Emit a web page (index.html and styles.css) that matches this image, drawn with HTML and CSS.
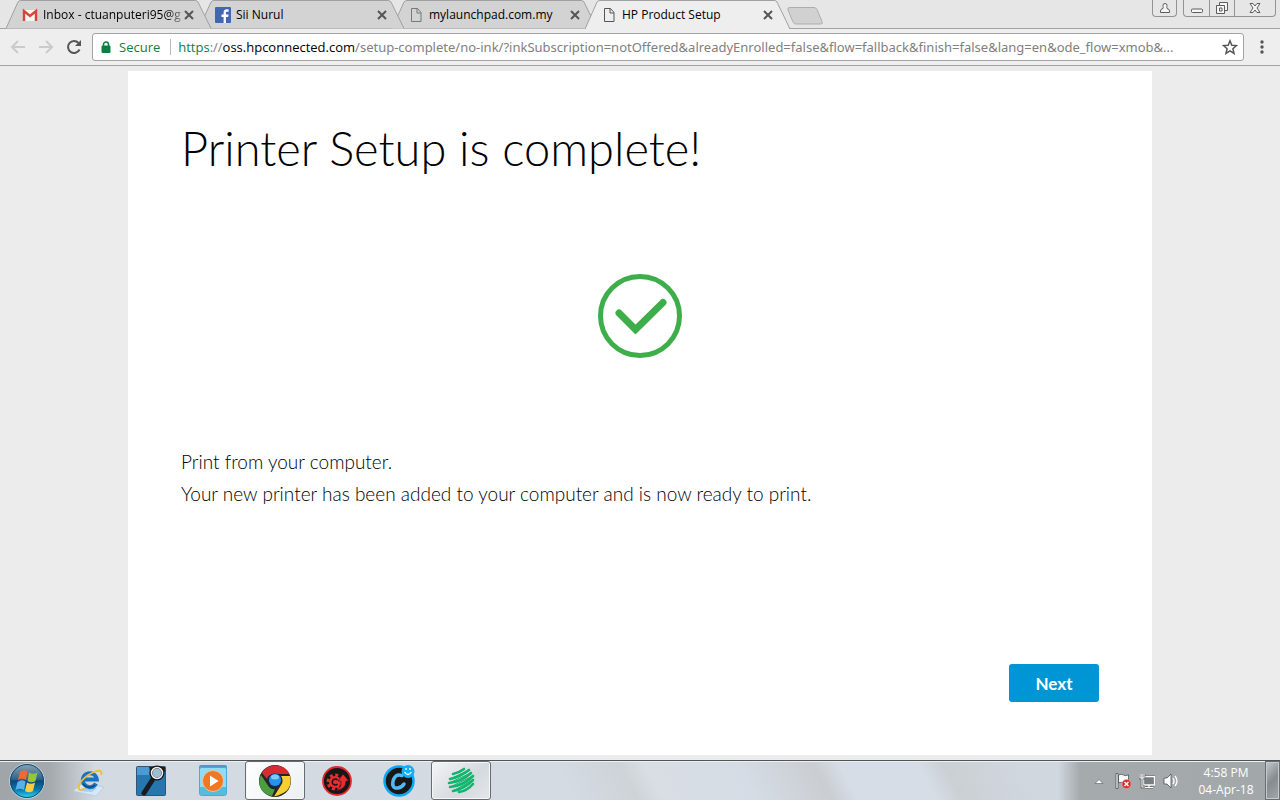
FILE: index.html
```html
<!DOCTYPE html>
<html lang="en">
<head>
    <meta charset="utf-8">
    <title>HP Product Setup</title>
    <link rel="stylesheet" href="styles.css">
</head>
<body>
    <!-- Tab strip -->
    <header class="tab-strip">
        <div class="tabs">
            <div class="tab tab-1">
                <svg class="tab-shape" viewBox="0 0 206 29" preserveAspectRatio="none"><path d="M0 28.5 L12 2 Q13 .5 15 .5 H189 Q191 .5 192 2 L205 28.5"/></svg>
                <svg class="tab-icon" viewBox="0 0 16 16"><path d="M1.500 3h13v11h-13z" fill="#f4f4f4"/><path d="M2 14V4L8 9l6-5v10" fill="none" stroke="#d84437" stroke-width="2.400"/></svg>
                <a class="tab-title fade" href="#">Inbox - ctuanputeri95@g</a>
                <button class="tab-close" aria-label="Close tab"><svg viewBox="0 0 10 10"><path d="M1 1l8 8M9 1L1 9"/></svg></button>
            </div>
            <div class="tab tab-2">
                <svg class="tab-shape" viewBox="0 0 206 29" preserveAspectRatio="none"><path d="M0 28.500 L12 2 Q13 .5 15 .5 H189 Q191 .5 192 2 L205 28.500"/></svg>
                <svg class="tab-icon" viewBox="0 0 16 16"><rect width="16" height="16" rx="1" fill="#4267b2"/><path d="M11 16v-6h2.200l.4-2.500H11V6c0-.8.400-1.200 1.300-1.200h1.300V2.500c-3.200-.6-5 .5-5 3v2H6.500V10h2.100v6z" fill="#fff"/></svg>
                <a class="tab-title" href="#">Sii Nurul</a>
                <button class="tab-close" aria-label="Close tab"><svg viewBox="0 0 10 10"><path d="M1 1l8 8M9 1L1 9"/></svg></button>
            </div>
            <div class="tab tab-3">
                <svg class="tab-shape" viewBox="0 0 206 29" preserveAspectRatio="none"><path d="M0 28.500 L12 2 Q13 .5 15 .5 H189 Q191 .5 192 2 L205 28.500"/></svg>
                <svg class="tab-icon" viewBox="0 0 16 16"><path d="M3.500 1.500h6l3.500 4v9H3.500zM9 1.500V6h4" fill="none" stroke="#777"/></svg>
                <a class="tab-title" href="#">mylaunchpad.com.my</a>
                <button class="tab-close" aria-label="Close tab"><svg viewBox="0 0 10 10"><path d="M1 1l8 8M9 1L1 9"/></svg></button>
            </div>
            <div class="tab tab-active">
                <svg class="tab-shape" viewBox="0 0 206 29" preserveAspectRatio="none"><path d="M0 29 L12 2 Q13 .5 15 .5 H189 Q191 .5 192 2 L205 29"/></svg>
                <svg class="tab-icon" viewBox="0 0 16 16"><path d="M3.500 1.500h6l3.500 4v9H3.500zM9 1.500V6h4" fill="none" stroke="#555"/></svg>
                <a class="tab-title" href="#">HP Product Setup</a>
                <button class="tab-close" aria-label="Close tab"><svg viewBox="0 0 10 10"><path d="M1 1l8 8M9 1L1 9"/></svg></button>
            </div>
            <button class="new-tab" aria-label="New tab"><svg viewBox="0 0 36 18"><path d="M3 .5h24q2 0 3 2l5 12q1 2.500-1 2.500H9q-2 0-3-2L1 3Q0 .5 3 .5z"/></svg></button>
        </div>
        <div class="window-buttons">
            <button class="win-btn win-user" aria-label="Profile"><svg viewBox="0 0 12 12"><path d="M6 1.500a2 2 0 0 1 2 2C8 5 7.500 6 8 6.500q2.500.5 2.500 2.500v1.500h-9V9q0-2 2.500-2.500C4.500 6 4 5 4 3.500a2 2 0 0 1 2-2z"/></svg></button>
            <div class="win-group">
                <button class="win-btn" aria-label="Minimize"><svg viewBox="0 0 12 12"><rect x=".5" y="7" width="11" height="3.500" rx="1"/></svg></button>
                <button class="win-btn" aria-label="Restore"><svg viewBox="0 0 12 12"><path d="M3.500 3V.5h8v8H9M.5 3.500h8v8h-8zM3.500 6h2.500v3H3.500z"/></svg></button>
                <button class="win-btn win-close" aria-label="Close"><svg viewBox="0 0 12 12"><path d="M1 1.500h3l2 2.500 2-2.500h3L8 6l3 4.500H8L6 8l-2 2.500H1L4 6z"/></svg></button>
            </div>
        </div>
    </header>

    <!-- Toolbar -->
    <nav class="toolbar">
        <button class="nav-btn" aria-label="Back"><svg viewBox="0 0 16 16"><path d="M15 8H2M8 2L2 8l6 6" fill="none" stroke="#cbcbcb" stroke-width="2"/></svg></button>
        <button class="nav-btn" aria-label="Forward"><svg viewBox="0 0 16 16"><path d="M1 8h13M8 2l6 6-6 6" fill="none" stroke="#cbcbcb" stroke-width="2"/></svg></button>
        <button class="nav-btn" aria-label="Reload"><svg viewBox="0 0 16 16"><path d="M13.500 10.500A6 6 0 1 1 12.500 4" fill="none" stroke="#555" stroke-width="2"/><path d="M15 1v6H9z" fill="#555"/></svg></button>
        <div class="address-bar">
            <svg class="lock" viewBox="0 0 10 12"><path d="M1 5h8v6.500H1z" fill="#0b8043" stroke="#0b8043"/><path d="M2.500 5V3.500a2.500 2.500 0 0 1 5 0V5" fill="none" stroke="#0b8043" stroke-width="1.500"/></svg>
            <span class="secure">Secure</span>
            <label class="url-host" for="url"><span class="scheme">https</span><span class="sep">://</span>oss.hpconnected.com</label>
            <input class="url-path" id="url" type="text" value="/setup-complete/no-ink/?inkSubscription=notOffered&amp;alreadyEnrolled=false&amp;flow=fallback&amp;finish=false&amp;lang=en&amp;ode_flow=xmob&amp;...">
            <button class="star" aria-label="Bookmark"><svg viewBox="0 0 16 16"><path d="M8 1.800l1.800 4.400 4.700.4-3.600 3.100 1.100 4.600L8 11.800l-4 2.500 1.100-4.600L1.500 6.600l4.700-.4z" fill="none" stroke="#555" stroke-width="1.500"/></svg></button>
        </div>
        <button class="menu-btn" aria-label="Menu"><svg viewBox="0 0 4 14"><circle cx="2" cy="2" r="1.700"/><circle cx="2" cy="7" r="1.700"/><circle cx="2" cy="12" r="1.700"/></svg></button>
    </nav>

    <!-- Page -->
    <main class="page">
        <section class="card">
            <h1>Printer Setup is complete!</h1>
            <svg class="check" viewBox="0 0 84 84"><circle cx="42" cy="42" r="39.500" fill="none" stroke="#3dae49" stroke-width="5"/><path d="M21 39l16.500 16.500L65 28.500" fill="none" stroke="#3dae49" stroke-width="7" stroke-linecap="round"/></svg>
            <div class="message">
                <p>Print from your computer.</p>
                <p>Your new printer has been added to your computer and is now ready to print.</p>
            </div>
            <button class="next-btn">Next</button>
        </section>
    </main>

    <!-- Taskbar -->
    <footer class="taskbar">
        <button class="start" aria-label="Start">
            <svg viewBox="0 0 38 38">
                <defs>
                    <linearGradient id="orb" x1="0" y1="0" x2="0" y2="1"><stop offset="0" stop-color="#8da5b6"/><stop offset=".45" stop-color="#2f638d"/><stop offset=".5" stop-color="#104778"/><stop offset=".75" stop-color="#087bb0"/><stop offset="1" stop-color="#38dcf8"/></linearGradient>
                </defs>
                <circle cx="19" cy="19" r="17.500" fill="url(#orb)" stroke="#b9d5e4"/>
                <circle cx="19" cy="19" r="16.500" fill="none" stroke="#174a6d"/>
                <path d="M12 10q4-3 7.500-.5L18 18q-4-2.500-8 0z" fill="#ef6a30"/>
                <path d="M21 10.500q4 2.500 8.500 0L27.500 19q-4 2.500-8 0z" fill="#93c83d"/>
                <path d="M9.500 20q4-3 8-.5L16 28q-4-2.500-8.500 0z" fill="#58b2ea"/>
                <path d="M19 20.500q4 2.500 8 0L25 29q-4 2.500-8 0z" fill="#fccd3d"/>
            </svg>
        </button>
        <div class="task-list">
            <button class="task" aria-label="Internet Explorer">
                <svg viewBox="0 0 32 32"><path d="M0 26l9-7 22 3-8 9z" fill="#d5e8f7" stroke="#a8c6df" stroke-width=".6"/><path d="M6 26l8-4 10 1-5 4z" fill="#accbe5"/><path d="M23 18.500a7 7 0 1 1 .8-4H11" fill="none" stroke="#1675bf" stroke-width="4"/><path d="M22 20a8 8 0 0 1-12-1" fill="none" stroke="#0b4c8c" stroke-width="1.500"/><path d="M28 10c2-5-2-5-7-3C11 11 4 20 6 24c1 2 4 0 6-1" fill="none" stroke="#f3bd35" stroke-width="1.800"/></svg>
            </button>
            <button class="task" aria-label="Search">
                <svg viewBox="0 0 32 32"><rect x="1.500" y="1.500" width="29" height="29" rx="1" fill="#2577ad" stroke="#305575"/><path d="M2 2h12v8H2z" fill="#4b9bd0"/><path d="M14 2h16v5H16z" fill="#19252f"/><path d="M18 14L9 28" stroke="#181b20" stroke-width="5" stroke-linecap="round"/><circle cx="22" cy="8" r="6" fill="#9dbdd1" stroke="#111" stroke-width="3"/><circle cx="22" cy="8" r="5.500" fill="none" stroke="#eee" stroke-width="1.500"/></svg>
            </button>
            <button class="task" aria-label="Media player">
                <svg viewBox="0 0 32 32"><rect x="2" y="0" width="28" height="6" rx="2" fill="#459dc8"/><rect x="2.500" y="2.500" width="27" height="28" rx="2" fill="#8fdcf3" stroke="#53a7cb"/><path d="M3 22h26v8H3z" fill="#54bddd"/><circle cx="16" cy="16" r="10.500" fill="#f07822" stroke="#e7c2a4"/><path d="M13 10.500v11l8.500-5.500z" fill="#fff"/></svg>
            </button>
            <button class="task open current" aria-label="Chrome">
                <svg viewBox="0 0 32 32"><circle cx="16" cy="16" r="16" fill="#252525"/><path d="M3 8C8-2 26-2 30.500 9H16q-7 0-8 5z" fill="#d42c32"/><path d="M2 10l8 12q3 3 6 2l-3 7C1 29-2 18 2 10z" fill="#4c9d40"/><path d="M31 11q4 16-16 20.500l8-13q1.500-4-1-7.500z" fill="#f8cf30"/><circle cx="16" cy="15.500" r="7" fill="#102f58"/><circle cx="16" cy="15" r="6" fill="#2792ec"/><ellipse cx="16" cy="12" rx="4" ry="2.500" fill="#7dcaff"/></svg>
            </button>
            <button class="task" aria-label="Driver booster">
                <svg viewBox="0 0 32 32"><circle cx="16" cy="16" r="14" fill="#171717" stroke="#e4292f" stroke-width="1.800"/><circle cx="14" cy="17" r="7" fill="none" stroke="#ec2b30" stroke-width="3" stroke-dasharray="3 2.500"/><circle cx="14" cy="17" r="6" fill="#ec2b30"/><path d="M16.500 15a3 3 0 1 0 0 4" fill="none" stroke="#171717" stroke-width="1.500"/><path d="M13 26q8-2 7-10h-3l5-7 6 7h-3q0 9-12 10z" fill="#ec2b30" stroke="#171717" stroke-width=".6"/></svg>
            </button>
            <button class="task" aria-label="Cleaner">
                <svg viewBox="0 0 32 32"><circle cx="16" cy="16" r="14.500" fill="#181818" stroke="#0ba8f5" stroke-width="2.500"/><path d="M19 10.500q-6-2-8.500 4c-2 6 0 9 4 8.500q4 0 6.500-4" fill="none" stroke="#55b8f4" stroke-width="3.500" stroke-linecap="round"/><circle cx="25" cy="6.500" r="6.500" fill="#13aef8"/><path d="M21.500 7q3.500 5 7 0M23 3v2M27 3v2" fill="none" stroke="#fff" stroke-width="1.300"/></svg>
            </button>
            <button class="task open" aria-label="Scribble">
                <svg viewBox="0 0 32 32"><g fill="none" stroke="#11b56d" stroke-width="2.600" stroke-linecap="round"><path d="M8 9Q14 8 19 4"/><path d="M5 14Q15 12 24 5"/><path d="M4 18Q16 17 26 8"/><path d="M5 22Q18 21 28 11"/><path d="M8 26Q19 24 28 15"/><path d="M14 27Q22 26 28 19"/></g><path d="M19 4L8 9M24 5L5 14M26 8L4 18M28 11L5 22M28 15L8 26" stroke="#11b56d"/></svg>
            </button>
        </div>
        <div class="tray">
            <button class="tray-btn" aria-label="Show hidden icons"><svg viewBox="0 0 16 16"><path d="M4 10.500L8 6.500l4 4z" fill="#fff" stroke="#666b70" stroke-width=".7"/></svg></button>
            <button class="tray-btn" aria-label="Action Center"><svg viewBox="0 0 16 16"><path d="M1 .5h2v15H1zM3.500 2q3-1.500 5 0t5-.2v8q-3 1-5 0t-5 0z" fill="#fff" stroke="#4d5154" stroke-width=".8"/><circle cx="11.500" cy="11" r="4.500" fill="#dc2828" stroke="#f4a5a0" stroke-width=".6"/><path d="M9.500 9l4 4m0-4l-4 4" stroke="#fff" stroke-width="1.500"/></svg></button>
            <button class="tray-btn" aria-label="Network"><svg viewBox="0 0 16 16"><path d="M4.500 3.500h11v8.500h-11zM6 14.500h8M10 12v2" fill="#777e82" stroke="#444" stroke-width="2.400"/><path d="M4.500 3.500h11v8.500h-11zM6 14.500h8M10 12v2" fill="#777e82" stroke="#fff" stroke-width="1.300"/><path d="M1 1v4h4V1M3 5v9h3" fill="none" stroke="#444" stroke-width="2.500"/><path d="M1 1v4h4V1M3 1v13h3" fill="none" stroke="#fff" stroke-width="1.200"/></svg></button>
            <button class="tray-btn" aria-label="Volume"><svg viewBox="0 0 16 16"><path d="M1 5h3l4-4v14l-4-4H1z" fill="#fff" stroke="#4d5154" stroke-width=".8"/><path d="M10 5q2 3 0 6M12 3q4 5 0 10" fill="none" stroke="#fff" stroke-width="1.300"/></svg></button>
            <div class="clock">
                <time>4:58 PM</time>
                <time>04-Apr-18</time>
            </div>
            <button class="show-desktop" aria-label="Show desktop"></button>
        </div>
    </footer>
</body>
</html>
```

FILE: styles.css
```css
* {
    box-sizing: border-box;
}

body {
    margin: 0;
    min-height: 100vh;
    display: flex;
    flex-direction: column;
    background: #ececec;
    font-family: "Open Sans", "Noto Sans", sans-serif;
    font-size: 12px;
    color: #000;
}

button {
    padding: 0;
    border: none;
    background: none;
    font-family: inherit;
    cursor: pointer;
}

a {
    color: inherit;
    text-decoration: none;
}

svg {
    display: block;
}

/* Tab strip */
.tab-strip {
    display: flex;
    justify-content: space-between;
    height: 29px;
    padding: 0 4px 0 6px;
    background: #e6e6e6;
    box-shadow: inset 0 -1px #a3a3a3;
}

.tabs {
    display: flex;
}

.tab {
    position: relative;
    display: flex;
    align-items: center;
    width: 206px;
    height: 29px;
    margin-right: -13px;
    padding: 0 18px 0 16px;
}

.tab-1 {
    z-index: 3;
}

.tab-2 {
    z-index: 2;
}

.tab-3 {
    z-index: 1;
}

.tab-active {
    z-index: 4;
}

.tab-shape {
    position: absolute;
    top: 0;
    left: 0;
    width: 100%;
    height: 100%;
    fill: #d3d3d3;
    stroke: #a0a0a0;
}

.tab-active .tab-shape {
    fill: #eee;
}

.tab-icon {
    position: relative;
    flex: none;
    width: 16px;
    height: 16px;
    margin-right: 5px;
}

.tab-title {
    position: relative;
    flex: 1;
    white-space: nowrap;
    line-height: 20px;
}

.fade {
    -webkit-mask-image: linear-gradient(to right, #000 88%, rgba(0, 0, 0, 0.2));
    mask-image: linear-gradient(to right, #000 88%, rgba(0, 0, 0, 0.2));
}

.tab-close {
    position: relative;
}

.tab-close svg {
    width: 10px;
    height: 10px;
    fill: none;
    stroke: #555;
    stroke-width: 2;
}

.new-tab {
    align-self: flex-start;
    margin: 7px 0 0 9px;
}

.new-tab svg {
    width: 36px;
    height: 18px;
    fill: #d1d1d1;
    stroke: #adadad;
}

.window-buttons {
    display: flex;
    align-items: flex-start;
    gap: 6px;
}

.win-group {
    display: flex;
    border: 1px solid #939393;
    border-top: none;
    border-radius: 0 0 4px 4px;
}

.win-btn {
    display: flex;
    align-items: center;
    justify-content: center;
    width: 25px;
    height: 16px;
}

.win-btn + .win-btn {
    border-left: 1px solid #939393;
}

.win-btn svg {
    width: 12px;
    height: 12px;
    fill: #f6f6f6;
    stroke: #5c5c5c;
}

.win-user {
    height: 17px;
    border: 1px solid #939393;
    border-top: none;
    border-radius: 0 0 4px 4px;
}

.win-close {
    width: 41px;
}

/* Toolbar */
.toolbar {
    display: flex;
    align-items: center;
    height: 37px;
    padding: 0 16px 0 10px;
    background: #eee;
    border-bottom: 1px solid #a3a3a3;
}

.nav-btn {
    margin-right: 12px;
}

.nav-btn svg {
    width: 16px;
    height: 16px;
}

.nav-btn:nth-child(3) {
    margin-right: 10px;
}

.address-bar {
    flex: 1;
    display: flex;
    align-items: center;
    height: 28px;
    padding: 0 5px 0 8px;
    background: #fff;
    border: 1px solid #a3a3a3;
    border-radius: 3px;
    font-size: 13px;
}

.lock {
    width: 10px;
    height: 12px;
}

.secure {
    margin: 0 7px 0 8px;
    padding-right: 10px;
    border-right: 1px solid #bbb;
    color: #0b8043;
    line-height: 16px;
}

.scheme {
    color: #0b8043;
}

.sep,
.url-path {
    color: #808080;
}

.url-path {
    flex: 1;
    min-width: 0;
    padding: 0;
    border: none;
    background: none;
    font-family: "Noto Sans", "Open Sans", sans-serif;
    font-size: inherit;
    outline: none;
}

.star svg {
    width: 16px;
    height: 16px;
}

.menu-btn {
    margin-left: 16px;
}

.menu-btn svg {
    width: 4px;
    height: 14px;
    fill: #555;
}

/* Page */
.page {
    flex: 1;
    display: flex;
    justify-content: center;
    padding: 5px 0;
}

.card {
    display: flex;
    flex-direction: column;
    width: 80%;
    padding: 47px 53px 53px;
    background: #fff;
    font-family: Lato, "Open Sans", sans-serif;
}

h1 {
    margin: 0;
    font-size: 47px;
    font-weight: 300;
    line-height: 60px;
}

.check {
    align-self: center;
    width: 84px;
    height: 84px;
    margin: 96px 0 88px;
}

.message p {
    margin: 0;
    font-size: 19px;
    font-weight: 300;
    line-height: 32px;
}

.next-btn {
    align-self: flex-end;
    width: 90px;
    height: 38px;
    margin-top: auto;
    border-radius: 3px;
    background: #0096d6;
    color: #fff;
    font-size: 17px;
    font-weight: 700;
}

/* Taskbar */
.taskbar {
    display: flex;
    height: 40px;
    border-top: 1px solid #505357;
    box-shadow: inset 0 1px #edf1f4;
    background:
        linear-gradient(to right, #a0a5a9 0, #a4a9ad 50px, transparent 95px),
        linear-gradient(to left, #a2a7aa 0, #a5aaad 200px, transparent 222px),
        linear-gradient(62deg, #d3d9e1 0, #d5dbe3 44%, #cdd3d7 49%, #d8dee3 51%, #d6dce5 58%, #caced2 64%, #d7dde6 66%, #d7dde6 72%, #cbd0d4 74%, #d1d7df 80%, #d1d7df 100%);
}

.start {
    width: 54px;
    padding-left: 8px;
}

.start svg {
    width: 38px;
    height: 38px;
}

.task-list {
    flex: 1;
    display: flex;
    gap: 2px;
    padding-left: 5px;
}

.task {
    display: flex;
    align-items: center;
    justify-content: center;
    width: 60px;
    height: 39px;
    border: 1px solid transparent;
    border-radius: 3px;
}

.task svg {
    width: 32px;
    height: 32px;
}

.task.open {
    border-color: #686c71;
    background: linear-gradient(135deg, #f3f5f6, #d5dadf 60%, #e3e7eb);
    box-shadow: inset 0 0 0 1px #f5f7f8;
}

.task.current {
    background: linear-gradient(135deg, #fff, #eceff1);
}

.tray {
    display: flex;
    align-items: center;
    color: #fff;
}

.tray-btn {
    margin-right: 8px;
}

.tray-btn svg {
    width: 16px;
    height: 16px;
}

.clock {
    width: 78px;
    text-align: center;
}

.clock time {
    display: block;
    line-height: 17px;
}

.show-desktop {
    width: 15px;
    height: 39px;
    border: 1px solid #686d71;
    background: linear-gradient(135deg, #c3c8cc, #858b90 50%, #a3a8ac);
    box-shadow: inset 0 0 0 1px #c5c9cc;
}
```
